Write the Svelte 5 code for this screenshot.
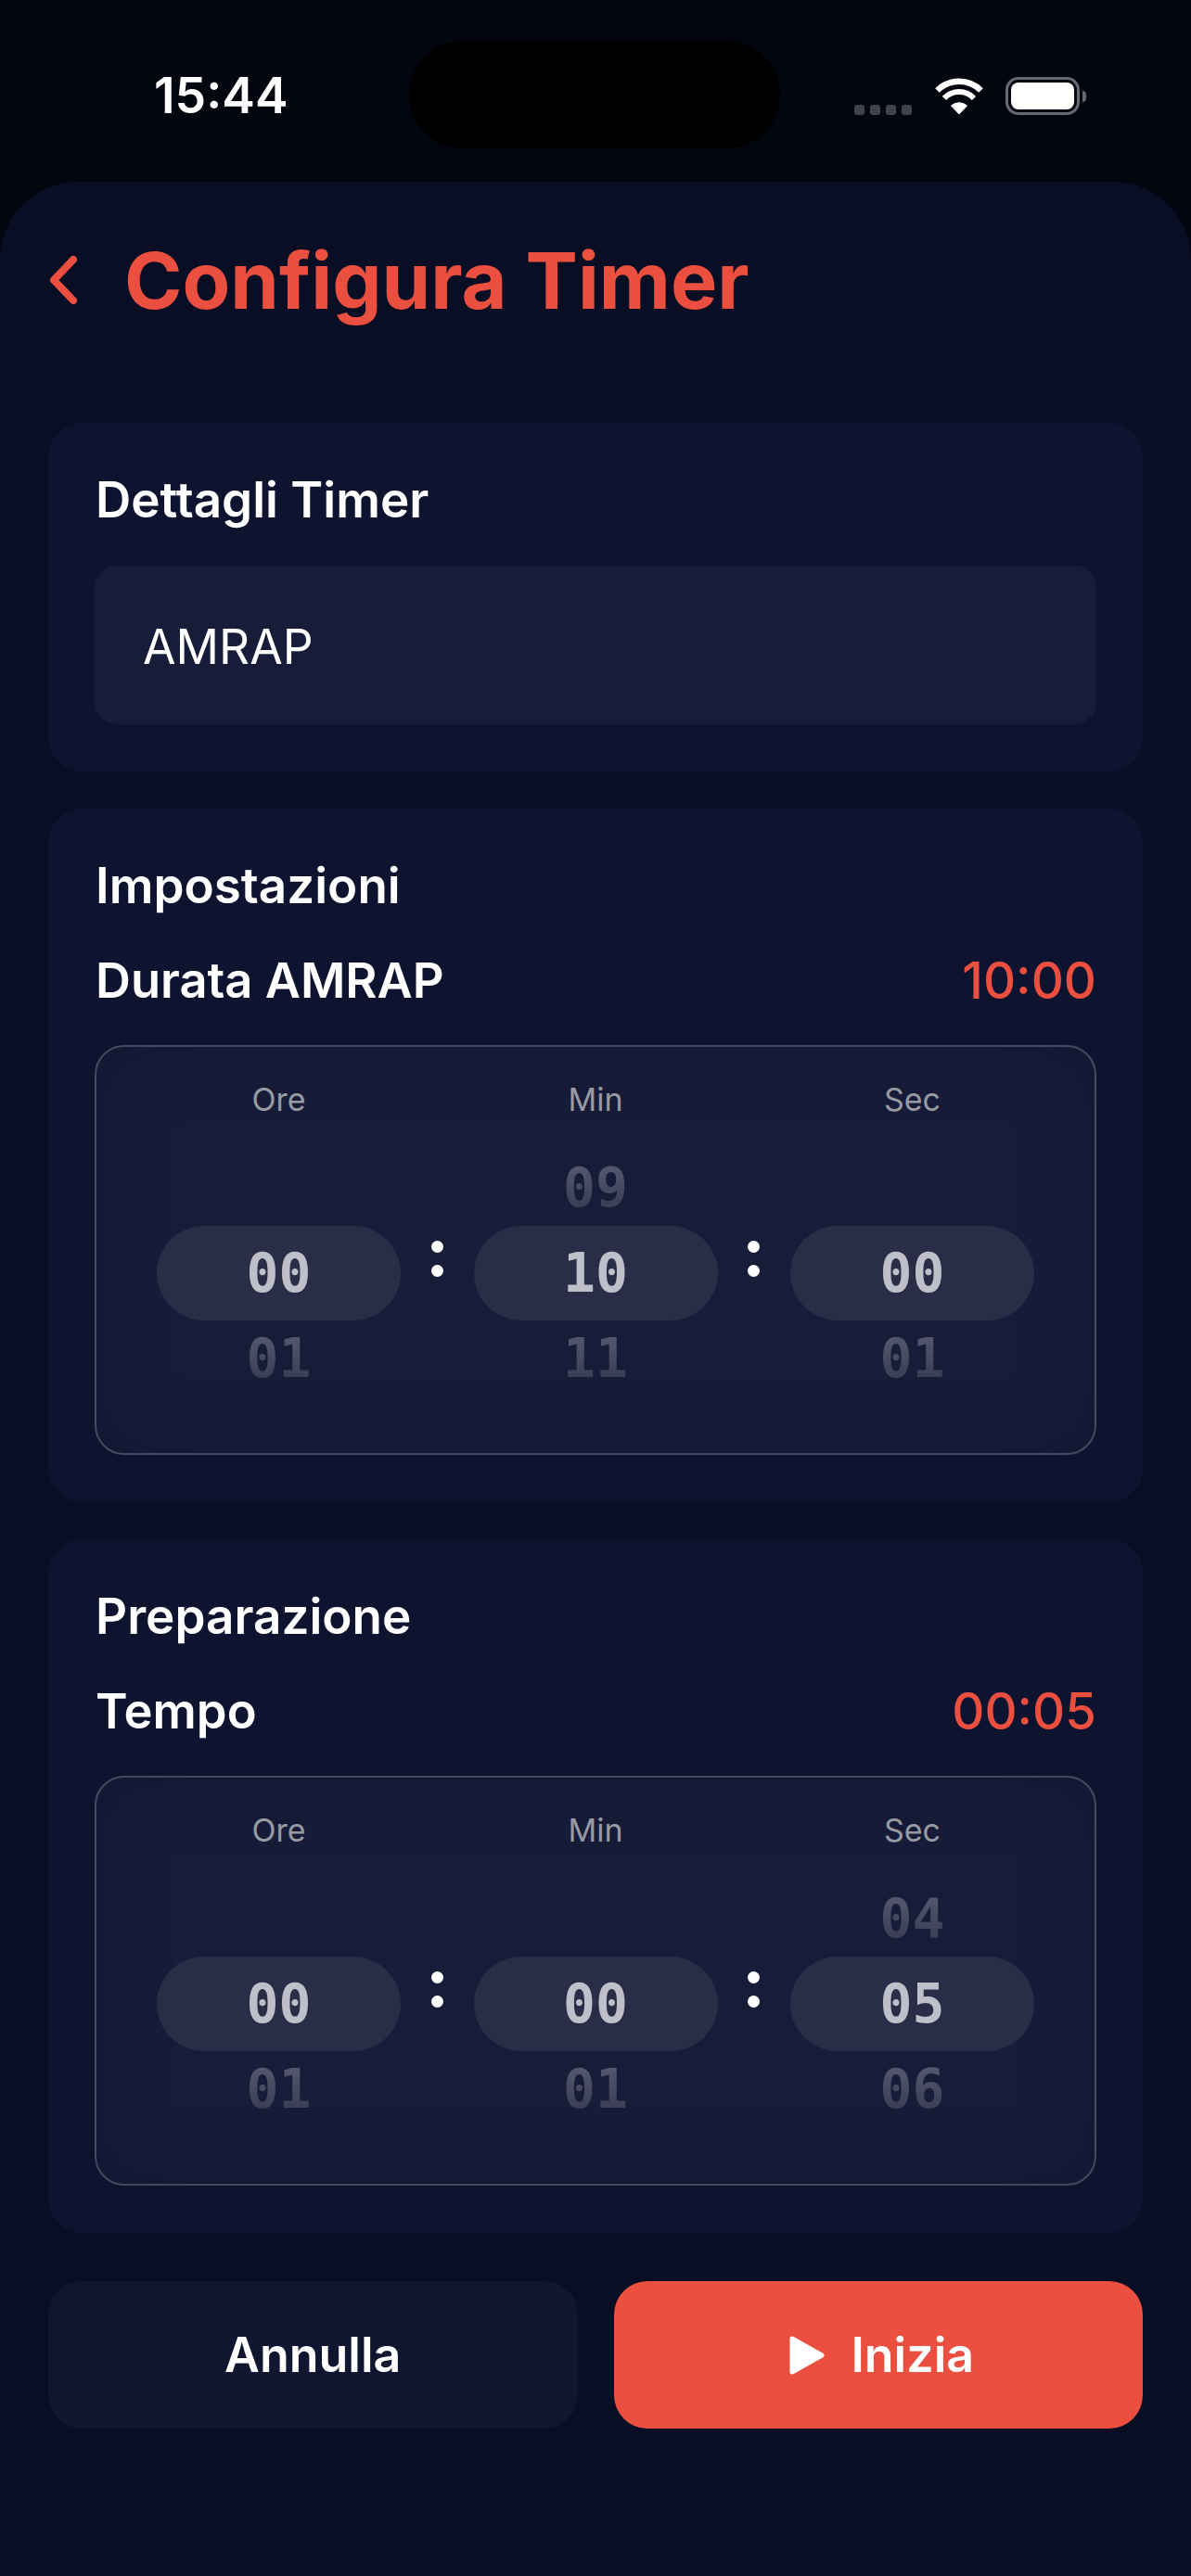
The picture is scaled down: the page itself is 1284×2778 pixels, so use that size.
<script>
  const sections = [
    {
      title: "Impostazioni",
      label: "Durata AMRAP",
      value: "10:00",
      wheels: [
        { name: "Ore", prev: "", cur: "00", next: "01" },
        { name: "Min", prev: "09", cur: "10", next: "11" },
        { name: "Sec", prev: "", cur: "00", next: "01" },
      ],
    },
    {
      title: "Preparazione",
      label: "Tempo",
      value: "00:05",
      wheels: [
        { name: "Ore", prev: "", cur: "00", next: "01" },
        { name: "Min", prev: "", cur: "00", next: "01" },
        { name: "Sec", prev: "04", cur: "05", next: "06" },
      ],
    },
  ];
</script>

<div class="phone">
  <header class="status">
    <span class="time">15:44</span>
    <div class="island"></div>
    <div class="indicators">
      <div class="signal"><i></i><i></i><i></i><i></i></div>
      <svg class="wifi" width="54" height="41" viewBox="0 0 54 41">
        <path d="M3.5 14.5A33 33 0 0 1 50.5 14.5" fill="none" stroke="#fff" stroke-width="6.5" />
        <path d="M11 23A22 22 0 0 1 43 23" fill="none" stroke="#fff" stroke-width="6" />
        <path d="M18.5 31A13 13 0 0 1 35.5 31L27 40Z" fill="#fff" stroke="#fff" stroke-linejoin="round" />
      </svg>
      <div class="battery"><div class="fill"></div></div>
      <div class="cap"></div>
    </div>
  </header>

  <main class="sheet">
    <div class="top">
      <svg class="back" width="32" height="54" viewBox="0 0 32 54">
        <path d="M26 5L5 27L26 49" fill="none" stroke="#ea4f3f" stroke-width="8" stroke-linecap="round" stroke-linejoin="round" />
      </svg>
      <h1>Configura Timer</h1>
    </div>

    <section class="card">
      <h2>Dettagli Timer</h2>
      <div class="field">AMRAP</div>
    </section>

    {#each sections as s}
      <section class="card">
        <h2>{s.title}</h2>
        <div class="row">
          <span class="label">{s.label}</span>
          <span class="value">{s.value}</span>
        </div>
        <div class="picker">
          {#each s.wheels as w, i}
            {#if i > 0}
              <div class="sep"><i></i><i></i></div>
            {/if}
            <div class="wheel">
              <div class="name">{w.name}</div>
              <div class="num side"><span>{w.prev}</span></div>
              <div class="num cur">{w.cur}</div>
              <div class="num side"><span>{w.next}</span></div>
            </div>
          {/each}
        </div>
      </section>
    {/each}

    <div class="actions">
      <button class="cancel">Annulla</button>
      <button class="start">
        <svg width="38" height="42" viewBox="0 0 38 42">
          <path d="M3 3L35 21L3 39Z" fill="#fff" stroke="#fff" stroke-width="5" stroke-linejoin="round" />
        </svg>
        Inizia
      </button>
    </div>
  </main>
</div>

<style>
  :global(body) {
    margin: 0;
    background: #03050f;
  }
  .phone {
    width: 1284px;
    height: 2778px;
    display: flex;
    flex-direction: column;
    background: #03050f;
    font-family: Inter, "Liberation Sans", sans-serif;
    color: #fff;
    overflow: hidden;
  }
  .status {
    height: 196px;
    flex: none;
    box-sizing: border-box;
    padding-top: 44px;
    display: flex;
    align-items: flex-start;
  }
  .time {
    width: 441px;
    box-sizing: border-box;
    padding-left: 166px;
    padding-top: 28px;
    font-size: 53.5px;
    line-height: 62px;
    font-weight: 600;
  }
  .island {
    width: 400px;
    height: 116px;
    border-radius: 58px;
    background: #000;
  }
  .indicators {
    display: flex;
    align-items: flex-end;
    padding-top: 39px;
    padding-left: 80px;
  }
  .signal {
    display: flex;
    gap: 6px;
  }
  .signal i {
    width: 11px;
    height: 11px;
    border-radius: 3px;
    background: #3f424f;
  }
  .wifi {
    margin-left: 24px;
  }
  .battery {
    width: 80px;
    height: 41px;
    box-sizing: border-box;
    margin-left: 23px;
    padding: 3px;
    border: 3px solid #666874;
    border-radius: 14px;
  }
  .fill {
    height: 100%;
    border-radius: 8px;
    background: #fff;
  }
  .cap {
    width: 4px;
    height: 12px;
    margin: 0 0 14px 3px;
    background: #666874;
    border-radius: 0 6px 6px 0;
  }
  .sheet {
    flex: 1;
    box-sizing: border-box;
    padding: 0 52px;
    border-radius: 84px 84px 0 0;
    background: #090e24;
    display: flex;
    flex-direction: column;
  }
  .top {
    height: 260px;
    flex: none;
    box-sizing: border-box;
    padding-bottom: 48px;
    display: flex;
    align-items: center;
  }
  .back {
    margin-left: 1px;
  }
  h1 {
    margin: 0 0 0 49px;
    font-size: 84.5px;
    line-height: 96px;
    font-weight: 700;
    color: #ea4f3f;
  }
  .card {
    flex: none;
    box-sizing: border-box;
    margin-bottom: 40px;
    padding: 58px 50px 51px;
    border-radius: 36px;
    background: #0e1330;
  }
  h2 {
    margin: 0 0 0 1px;
    font-size: 53px;
    line-height: 50px;
    font-weight: 600;
  }
  .field {
    height: 171px;
    box-sizing: border-box;
    margin-top: 46px;
    padding-left: 52px;
    padding-top: 2px;
    display: flex;
    align-items: center;
    border-radius: 24px;
    background: #171c38;
    font-size: 51.5px;
  }
  .row {
    margin-top: 52px;
    margin-left: 1px;
    display: flex;
    justify-content: space-between;
    align-items: center;
    height: 50px;
  }
  .label {
    font-size: 52.5px;
    font-weight: 600;
  }
  .value {
    font-size: 54.5px;
    font-weight: 500;
    color: #ea4f3f;
  }
  .picker {
    height: 442px;
    box-sizing: border-box;
    margin-top: 45px;
    padding: 37px 65px 0;
    display: flex;
    align-items: flex-start;
    border: 2px solid #464a5e;
    border-radius: 32px;
    background: #171c38;
    box-shadow: inset 0 0 70px rgba(14, 19, 48, 0.55);
  }
  .wheel {
    width: 263px;
    flex: none;
    text-align: center;
  }
  .name {
    height: 40px;
    margin-bottom: 34px;
    font-size: 34px;
    line-height: 40px;
    color: #989aa3;
  }
  .num {
    font-family: "DejaVu Sans Mono", "Liberation Mono", monospace;
    font-size: 58px;
    font-weight: 700;
    display: flex;
    align-items: center;
    justify-content: center;
  }
  .side {
    height: 82px;
  }
  .side span {
    background: linear-gradient(#5a5d72, #33374e);
    -webkit-background-clip: text;
    background-clip: text;
    color: transparent;
  }
  .cur {
    height: 102px;
    border-radius: 51px;
    background: #2a2d47;
    color: #bfbfca;
  }
  .sep {
    width: 78.5px;
    flex: none;
    margin-top: 172px;
    display: flex;
    flex-direction: column;
    align-items: center;
    gap: 13px;
  }
  .sep i {
    width: 13px;
    height: 13px;
    border-radius: 50%;
    background: #fff;
  }
  .actions {
    display: flex;
    gap: 39px;
    margin-top: 12px;
  }
  button {
    flex: 1;
    height: 159px;
    border: none;
    border-radius: 36px;
    font-family: inherit;
    font-size: 52px;
    font-weight: 600;
    color: #fff;
    display: flex;
    align-items: center;
    justify-content: center;
  }
  .cancel {
    background: #111630;
  }
  .start {
    gap: 28px;
    background: #ea4f3f;
  }
  .start svg {
    margin-left: 8px;
  }
</style>
